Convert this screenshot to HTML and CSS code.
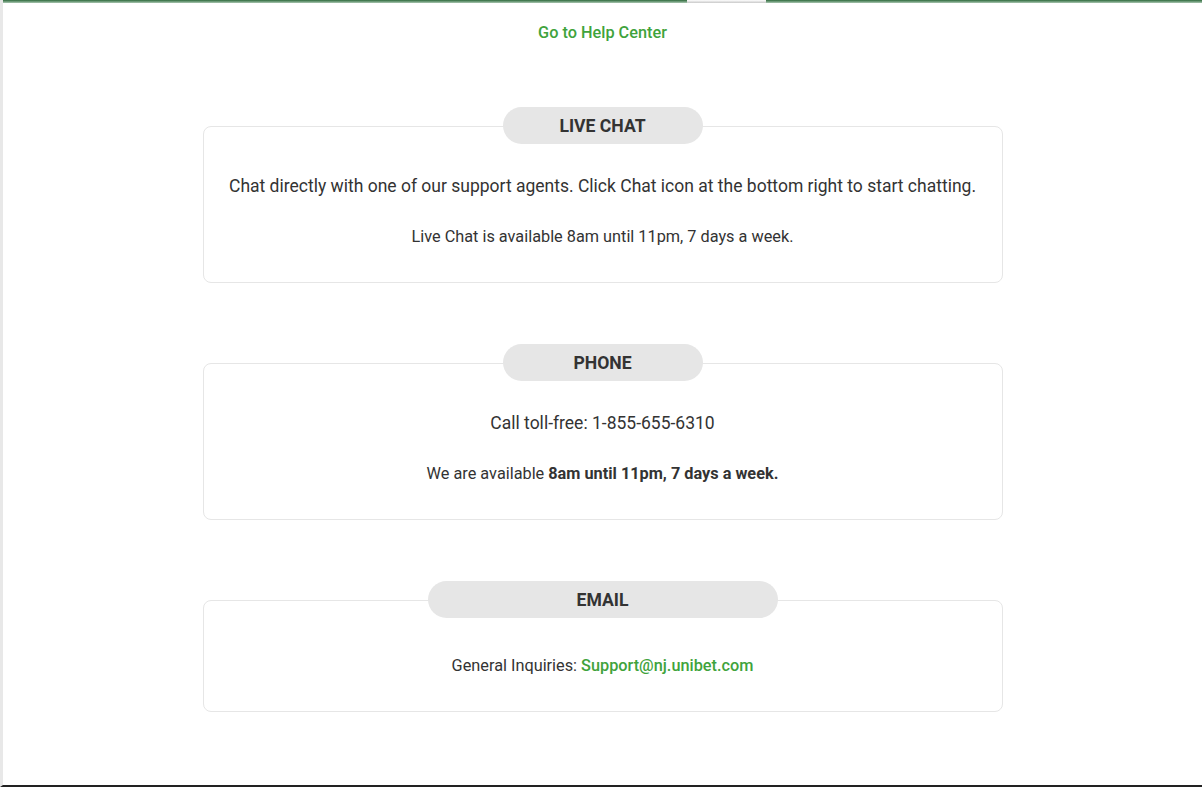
FILE: index.html
```html
<!DOCTYPE html>
<html lang="en">
<head>
  <meta charset="UTF-8" />
  <meta name="viewport" content="width=device-width, initial-scale=1.0"/>
  <title>Contact Us</title>
  <link rel="stylesheet" href="styles.css">
</head>
<body>
  <div class="page">
    <div class="topbar"><span class="tab"></span></div>
    <p class="help"><a href="#">Go to Help Center</a></p>

    <section class="block">
      <h2 class="pill">LIVE CHAT</h2>
      <div class="card">
        <p class="lead">Chat directly with one of our support agents. Click Chat icon at the bottom right to start chatting.</p>
        <p class="note">Live Chat is available 8am until 11pm, 7 days a week.</p>
      </div>
    </section>

    <section class="block">
      <h2 class="pill">PHONE</h2>
      <div class="card">
        <p class="lead">Call toll-free: 1-855-655-6310</p>
        <p class="note">We are available <strong>8am until 11pm, 7 days a week.</strong></p>
      </div>
    </section>

    <section class="block">
      <h2 class="pill pill-wide">EMAIL</h2>
      <div class="card card-single">
        <p class="note">General Inquiries: <a href="#">Support@nj.unibet.com</a></p>
      </div>
    </section>
  </div>
</body>
</html>
```

FILE: styles.css
```css
* {
  box-sizing: border-box;
}
body {
  margin: 0;
  font-family: Roboto, "Liberation Sans", Arial, sans-serif;
  color: #333;
  background-color: #fff;
}
a {
  color: #3fa33c;
  font-weight: 500;
  text-decoration: none;
}
.page {
  height: 787px;
  border-left: 3px solid #e8e8e8;
  border-bottom: 2px solid #222;
  overflow: hidden;
}
.topbar {
  position: relative;
  height: 3px;
  margin-left: -3px;
  background: linear-gradient(#2e6a3c, #a9c7b1);
}
.tab {
  position: absolute;
  left: 687px;
  top: 0;
  width: 79px;
  height: 3px;
  background: linear-gradient(#fff, #c8c8c8);
}
.help {
  margin: 20px 0 0;
  font-size: 16.3px;
  line-height: 20px;
  text-align: center;
}
.block {
  width: 800px;
  margin: 61px auto 0;
  display: flex;
  flex-direction: column;
  align-items: center;
}
.block:first-of-type {
  margin-top: 64px;
}
.pill {
  position: relative;
  z-index: 1;
  width: 200px;
  height: 37px;
  margin: 0 0 -18px;
  border-radius: 19px;
  background-color: #e6e6e6;
  font-size: 17.6px;
  font-weight: 700;
  line-height: 38px;
  text-align: center;
}
.pill-wide {
  width: 350px;
}
.card {
  width: 100%;
  padding: 47px 10px 35px;
  border: 1px solid #e6e6e6;
  border-radius: 8px;
  text-align: center;
}
.card-single {
  padding-top: 55px;
}
.card p {
  margin: 0;
}
.lead {
  font-size: 17.5px;
  line-height: 24px;
}
.note {
  margin-top: 29px !important;
  font-size: 16.3px;
  line-height: 20px;
}
.card-single .note {
  margin-top: 0 !important;
}
```
